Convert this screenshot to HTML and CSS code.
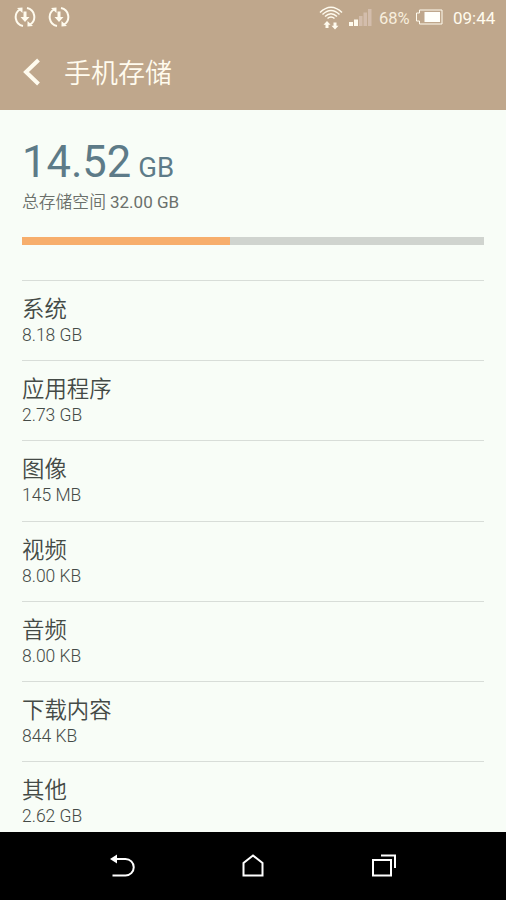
FILE: index.html
```
<!DOCTYPE html>
<html lang="zh-CN">

<head>
    <meta charset="UTF-8">
    <meta name="viewport" content="width=device-width, initial-scale=1.0">
    <title>手机存储</title>
    <link rel="stylesheet" href="styles.css">
</head>

<body>
    <header class="header">
        <div class="status-bar">
            <svg class="sync-icon" viewBox="0 0 22 22">
                <path d="M6 3.500A9 9 0 0 0 9 20M16 18.500A9 9 0 0 0 13 2" />
                <path class="solid" d="M3 2l5.500-.5V7zM19 20l-5.500.5V15zM9.500 5.500h3v5.500h3L11 16l-4.500-5h3z" />
            </svg>
            <svg class="sync-icon" viewBox="0 0 22 22">
                <path d="M6 3.500A9 9 0 0 0 9 20M16 18.500A9 9 0 0 0 13 2" />
                <path class="solid" d="M3 2l5.500-.5V7zM19 20l-5.500.5V15zM9.500 5.500h3v5.500h3L11 16l-4.500-5h3z" />
            </svg>
            <svg class="wifi-icon" viewBox="0 0 24 24">
                <path d="M1 6.500Q12-4 23 6.500M3.500 8.500Q12 .5 20.500 8.500M6 10.500Q12 5 18 10.500M8.500 12.500Q12 9.500 15.500 12.500" />
                <path class="solid" d="M8 15l3.500 3.800H9.500V22h-3v-3.200h-2zM16 23.500l-3.500-3.800h2V16.500h3v3.200h2z" />
            </svg>
            <svg class="signal-icon" viewBox="0 0 24 20">
                <path class="on" d="M0 14h4v4H0zM5 11.500h4V18H5z" />
                <path class="off" d="M10 8h3.500v10H10zM14.500 4.500H18V18h-3.500zM19 1h3.500v17H19z" />
            </svg>
            <span class="percent">68%</span>
            <svg class="battery-icon" viewBox="0 0 28 16">
                <path d="M4.500 1h22.500v14H4.500v-3h-3V4h3z" />
                <rect x="9.500" y="3" width="15.500" height="10" />
            </svg>
            <span class="clock">09:44</span>
        </div>
        <div class="title-bar">
            <svg class="back-icon" viewBox="0 0 18 28">
                <path d="M16.500 2L4 14l12.500 12" />
            </svg>
            <h1>手机存储</h1>
        </div>
    </header>

    <main class="content">
        <section class="summary">
            <div class="used">
                <span>14.52</span>
                <span class="unit">GB</span>
            </div>
            <div class="total">总存储空间 <span class="capacity">32.00 GB</span></div>
            <div class="progress">
                <div class="progress-value" style="width: 45%;"></div>
            </div>
        </section>

        <ul class="storage-list">
            <li>
                <div class="name">系统</div>
                <div class="size">8.18 GB</div>
            </li>
            <li>
                <div class="name">应用程序</div>
                <div class="size">2.73 GB</div>
            </li>
            <li>
                <div class="name">图像</div>
                <div class="size">145 MB</div>
            </li>
            <li>
                <div class="name">视频</div>
                <div class="size">8.00 KB</div>
            </li>
            <li>
                <div class="name">音频</div>
                <div class="size">8.00 KB</div>
            </li>
            <li>
                <div class="name">下载内容</div>
                <div class="size">844 KB</div>
            </li>
            <li>
                <div class="name">其他</div>
                <div class="size">2.62 GB</div>
            </li>
        </ul>
    </main>

    <nav class="nav-bar">
        <svg viewBox="0 0 26 26">
            <path d="M4 6h12.500a8 8 0 0 1 0 16.500H3.500" />
            <path class="solid" d="M1 6l7-4.500v9z" />
        </svg>
        <svg viewBox="0 0 26 26">
            <path d="M3.500 22.500V10L13 2.500 22.500 10v12.500z" />
        </svg>
        <svg viewBox="0 0 26 26">
            <path d="M2 7h18v15.500H2z" />
            <path d="M10 2.500h14V15" />
        </svg>
    </nav>
</body>

</html>
```
FILE: styles.css
```
body {
    font-family: Roboto, 'Noto Sans CJK SC', sans-serif;
    background-color: #f8fdf7;
    color: #444a46;
    margin: 0;
    height: 100vh;
    display: flex;
    flex-direction: column;
    overflow: hidden;
}

svg {
    display: block;
    flex: none;
    fill: none;
    stroke: #fffbee;
    stroke-width: 2;
}

svg .solid {
    fill: #fffbee;
    stroke: none;
}

/* Header */
.header {
    background-color: #bfa78c;
    color: #fffbee;
    height: 110px;
    flex: none;
}

.status-bar {
    display: flex;
    align-items: center;
    height: 36px;
    padding: 0 11px 0 14px;
}

.sync-icon {
    width: 22px;
    height: 22px;
    margin: -3px 12px 0 0;
}

.wifi-icon {
    width: 24px;
    height: 24px;
    margin: -1px 0 0 auto;
    stroke-width: 1.5;
}

.signal-icon {
    width: 24px;
    height: 20px;
    margin-left: 6px;
    stroke: none;
}

.signal-icon .on {
    fill: #fffbee;
}

.signal-icon .off {
    fill: #d3bdac;
}

.percent {
    font-size: 16.5px;
    width: 32px;
    margin-left: 6px;
    color: #f8eedd;
}

.battery-icon {
    width: 28px;
    height: 16px;
    margin: -2px 10px 0 4px;
    stroke-width: 1;
}

.battery-icon rect {
    fill: #fffffa;
    stroke: none;
}

.clock {
    font-size: 17px;
    width: 42px;
}

.title-bar {
    display: flex;
    align-items: center;
    height: 71px;
    padding-left: 22px;
}

.back-icon {
    width: 18px;
    height: 28px;
    stroke-width: 4;
}

.title-bar h1 {
    font-size: 27px;
    font-weight: 350;
    line-height: 40px;
    margin: 5px 0 0 24px;
}

/* Storage usage */
.content {
    flex: 1;
    min-height: 0;
    overflow: hidden;
    padding: 0 22px;
}

.summary {
    height: 170px;
}

.used {
    display: flex;
    align-items: baseline;
    gap: 7px;
    font-size: 43.5px;
    line-height: 52px;
    padding-top: 27px;
    color: #5d7b88;
}

.unit {
    font-size: 27.5px;
    line-height: 30px;
}

.total {
    font-size: 16.8px;
    font-weight: 350;
    line-height: 26px;
    color: #6b706b;
}

.capacity {
    font-size: 17px;
    font-weight: 400;
}

.progress {
    height: 8px;
    margin-top: 22px;
    background-color: #d0d4cf;
}

.progress-value {
    height: 8px;
    background-color: #f7ae6c;
}

.storage-list {
    list-style: none;
    margin: 0;
    padding: 0;
}

.storage-list li {
    box-sizing: border-box;
    height: 80.2px;
    border-top: 1px solid #d8ddd8;
    padding-top: 13px;
}

.name {
    font-size: 22.4px;
    font-weight: 350;
    line-height: 30px;
}

.size {
    font-size: 17.5px;
    font-weight: 300;
    line-height: 23px;
}

/* Bottom navigation */
.nav-bar {
    display: flex;
    align-items: center;
    justify-content: space-between;
    box-sizing: border-box;
    height: 68px;
    flex: none;
    padding: 0 109px;
    background-color: #000;
}

.nav-bar svg {
    width: 26px;
    height: 26px;
    stroke: #fff;
}

.nav-bar .solid {
    fill: #fff;
    stroke: none;
}
```
